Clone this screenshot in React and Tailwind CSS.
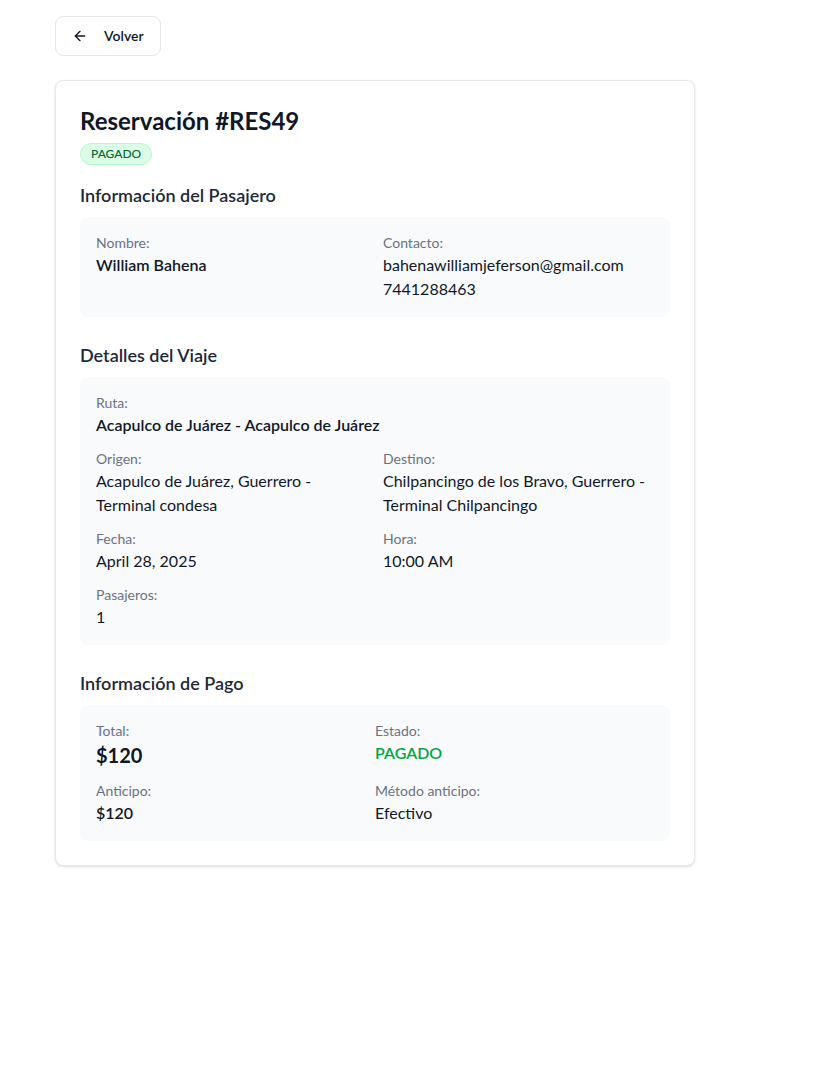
import { ArrowLeft } from 'lucide-react'

function Field({ label, children, className = '' }) {
  return (
    <div className={className}>
      <p className="text-sm text-gray-500">{label}</p>
      {children}
    </div>
  )
}

export default function App() {
  return (
    <div className="min-h-screen bg-white px-[55px] pt-4 text-gray-900 font-['Lato',sans-serif]">
      <button className="flex items-center gap-4 h-10 px-4 mb-6 border border-gray-200 rounded-lg bg-white text-sm font-semibold">
        <ArrowLeft className="w-4 h-4" strokeWidth={2} />
        Volver
      </button>

      <div className="w-[640px] bg-white border border-gray-200 rounded-lg shadow-sm p-6">
        <h1 className="text-2xl font-bold">Reservación #RES49</h1>
        <span className="inline-block mt-1.5 px-2.5 py-0.5 rounded-full border border-green-200 bg-green-100 text-green-800 text-xs font-medium">
          PAGADO
        </span>

        {/* Pasajero */}
        <h2 className="mt-4 mb-2 text-lg font-semibold text-gray-800">Información del Pasajero</h2>
        <div className="bg-gray-50 rounded-lg p-4 grid grid-cols-2 gap-4">
          <Field label="Nombre:">
            <p className="font-semibold">William Bahena</p>
          </Field>
          <Field label="Contacto:">
            <p>bahenawilliamjeferson@gmail.com</p>
            <p>7441288463</p>
          </Field>
        </div>

        {/* Viaje */}
        <h2 className="mt-6 mb-2 text-lg font-semibold text-gray-800">Detalles del Viaje</h2>
        <div className="bg-gray-50 rounded-lg p-4 grid grid-cols-2 gap-x-4 gap-y-3">
          <Field label="Ruta:" className="col-span-2">
            <p className="font-semibold">Acapulco de Juárez - Acapulco de Juárez</p>
          </Field>
          <Field label="Origen:">
            <p>Acapulco de Juárez, Guerrero - Terminal condesa</p>
          </Field>
          <Field label="Destino:">
            <p>Chilpancingo de los Bravo, Guerrero - Terminal Chilpancingo</p>
          </Field>
          <Field label="Fecha:">
            <p>April 28, 2025</p>
          </Field>
          <Field label="Hora:">
            <p>10:00 AM</p>
          </Field>
          <Field label="Pasajeros:">
            <p>1</p>
          </Field>
        </div>

        {/* Pago */}
        <h2 className="mt-6 mb-2 text-lg font-semibold text-gray-800">Información de Pago</h2>
        <div className="bg-gray-50 rounded-lg p-4 grid grid-cols-2 gap-y-3">
          <Field label="Total:">
            <p className="text-xl font-bold">$120</p>
          </Field>
          <Field label="Estado:">
            <p className="font-semibold text-green-600">PAGADO</p>
          </Field>
          <Field label="Anticipo:">
            <p className="font-semibold">$120</p>
          </Field>
          <Field label="Método anticipo:">
            <p>Efectivo</p>
          </Field>
        </div>
      </div>
    </div>
  )
}
